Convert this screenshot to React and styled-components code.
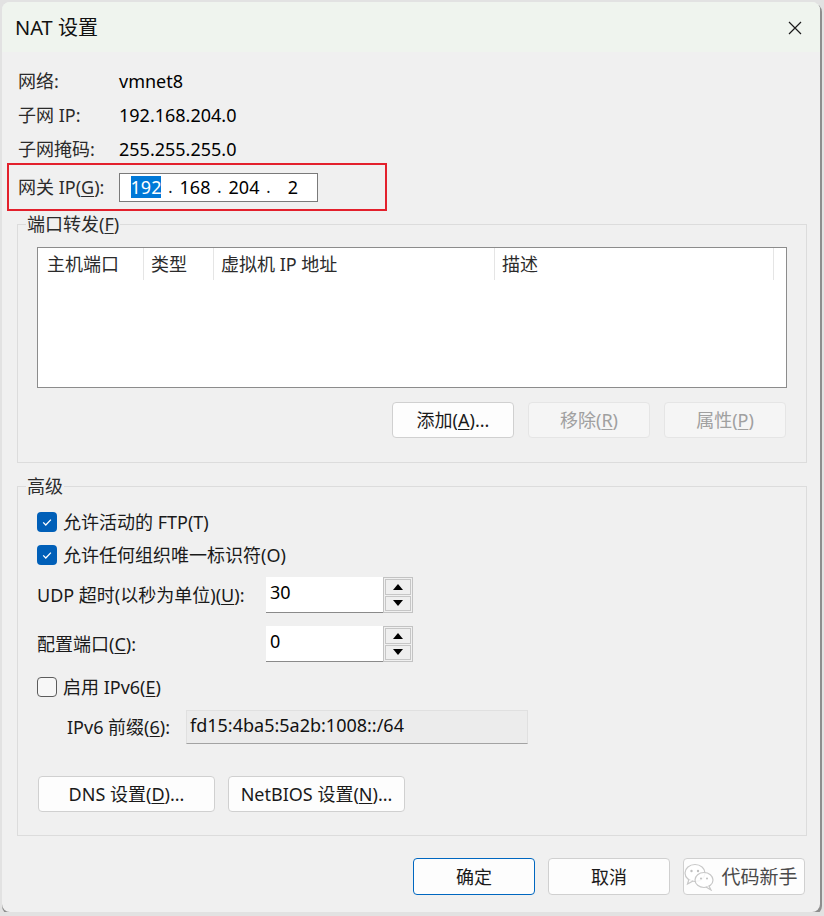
import React from "react";
import styled, { createGlobalStyle } from "styled-components";

const GlobalStyle = createGlobalStyle`
  html, body {
    margin: 0;
    padding: 0;
    background: #e2e2e2;
  }
  body {
    font-family: "Noto Sans", "Noto Sans CJK SC", sans-serif;
    font-size: 18px;
    line-height: 22px;
    color: #1a1a1a;
  }
  * { box-sizing: border-box; }
  u { text-underline-offset: 2px; text-decoration-thickness: 1px; }
`;

const info = [
  { label: "网络:", value: "vmnet8" },
  { label: "子网 IP:", value: "192.168.204.0" },
  { label: "子网掩码:", value: "255.255.255.0" },
];

const columns = [
  { title: "主机端口", width: 106, pad: 9 },
  { title: "类型", width: 70, pad: 7 },
  { title: "虚拟机 IP 地址", width: 281, pad: 7 },
  { title: "描述", width: 279, pad: 7 },
];

const Check = () => (
  <svg width="20" height="20" viewBox="0 0 20 20">
    <path d="M6.2 10.4 L8.8 13 L13.9 7.6" fill="none" stroke="#fff" strokeWidth="1.3" />
  </svg>
);

const Arrow = ({ up }) => (
  <svg width="10" height="6" viewBox="0 0 10 6">
    <path d={up ? "M0 6 L5 0 L10 6 Z" : "M0 0 L10 0 L5 6 Z"} fill="#000" />
  </svg>
);

const WeChat = () => (
  <svg width="32" height="28" viewBox="0 0 32 28">
    <g fill="rgba(255,255,255,0.85)" stroke="#c8c8c8" strokeWidth="1.2">
      <ellipse cx="11" cy="10" rx="10" ry="8.5" />
      <path d="M5 16 L3.5 21 L9 18" />
      <ellipse cx="20" cy="17" rx="9" ry="7.5" />
      <path d="M25 23 L27 27 L22 24" />
    </g>
    <g fill="#c0c0c0">
      <circle cx="7.5" cy="8" r="1.2" />
      <circle cx="14" cy="8" r="1.2" />
      <circle cx="17" cy="15.5" r="1" />
      <circle cx="23" cy="15.5" r="1" />
    </g>
  </svg>
);

const App = () => {
  return (
    <>
      <GlobalStyle />
      <Window>
        <TitleBar>
          <Title>NAT 设置</Title>
          <CloseIcon width="14" height="14" viewBox="0 0 14 14">
            <path d="M1 1 L13 13 M13 1 L1 13" stroke="#1a1a1a" strokeWidth="1.2" />
          </CloseIcon>
        </TitleBar>
        <Body>
          <InfoGrid>
            {info.map((row) => (
              <React.Fragment key={row.label}>
                <Label>{row.label}</Label>
                <Value>{row.value}</Value>
              </React.Fragment>
            ))}
          </InfoGrid>

          <GatewayBox>
            <GatewayLabel>
              网关 IP(<u>G</u>):
            </GatewayLabel>
            <IpBox>
              <IpPart>
                <Selected>192</Selected>
              </IpPart>
              <IpDot>.</IpDot>
              <IpPart>168</IpPart>
              <IpDot>.</IpDot>
              <IpPart>204</IpPart>
              <IpDot>.</IpDot>
              <IpPart>2</IpPart>
            </IpBox>
          </GatewayBox>

          <Group $top={2} $padBottom={24}>
            <Legend>
              端口转发(<u>F</u>)
            </Legend>
            <ListView>
              <ListHeader>
                {columns.map((c) => (
                  <HeaderCell key={c.title} $w={c.width} $pad={c.pad}>
                    {c.title}
                  </HeaderCell>
                ))}
              </ListHeader>
            </ListView>
            <ButtonRow>
              <Button>
                添加(<u>A</u>)...
              </Button>
              <Button disabled>
                移除(<u>R</u>)
              </Button>
              <Button disabled>
                属性(<u>P</u>)
              </Button>
            </ButtonRow>
          </Group>

          <Group $top={12} $padTop={8} $padBottom={23}>
            <Legend>高级</Legend>
            <CheckRow>
              <CheckBox $checked>
                <Check />
              </CheckBox>
              <span>允许活动的 FTP(T)</span>
            </CheckRow>
            <CheckRow>
              <CheckBox $checked>
                <Check />
              </CheckBox>
              <span>允许任何组织唯一标识符(O)</span>
            </CheckRow>

            <FieldRow $top={6}>
              <FieldLabel $w={229}>
                UDP 超时(以秒为单位)(<u>U</u>):
              </FieldLabel>
              <SpinBox>
                <SpinInput $h={36}>30</SpinInput>
                <SpinButtons>
                  <SpinButton>
                    <Arrow up />
                  </SpinButton>
                  <SpinButton>
                    <Arrow />
                  </SpinButton>
                </SpinButtons>
              </SpinBox>
            </FieldRow>

            <FieldRow $top={13}>
              <FieldLabel $w={229}>
                配置端口(<u>C</u>):
              </FieldLabel>
              <SpinBox>
                <SpinInput $h={36}>0</SpinInput>
                <SpinButtons>
                  <SpinButton>
                    <Arrow up />
                  </SpinButton>
                  <SpinButton>
                    <Arrow />
                  </SpinButton>
                </SpinButtons>
              </SpinBox>
            </FieldRow>

            <CheckRow $top={8}>
              <CheckBox />
              <span>
                启用 IPv6(<u>E</u>)
              </span>
            </CheckRow>

            <FieldRow $top={7} $indent={30}>
              <FieldLabel $w={119}>
                IPv6 前缀(<u>6</u>):
              </FieldLabel>
              <DisabledInput>fd15:4ba5:5a2b:1008::/64</DisabledInput>
            </FieldRow>

            <DnsRow>
              <Button $w={177}>
                DNS 设置(<u>D</u>)...
              </Button>
              <Button $w={177}>
                NetBIOS 设置(<u>N</u>)...
              </Button>
            </DnsRow>
          </Group>

          <Footer>
            <Button $primary $h={37}>
              确定
            </Button>
            <Button $h={37}>取消</Button>
            <Button $h={37}>
              <Watermark>
                <WeChat />
                <WatermarkText>代码新手</WatermarkText>
              </Watermark>
            </Button>
          </Footer>
        </Body>
      </Window>
    </>
  );
};
export default App;

const Window = styled.div`
  margin: 2px 0 0 2px;
  width: 818px;
  height: 910px;
  background: #f0f0f0;
  border-radius: 8px;
  box-shadow: 1px 2px 0 1px #8e8e8e;
  overflow: hidden;
  display: flex;
  flex-direction: column;
`;

const TitleBar = styled.div`
  height: 50px;
  flex-shrink: 0;
  background: #eff4ee;
  display: flex;
  align-items: center;
  justify-content: space-between;
  padding: 0 18px 0 13px;
`;

const Title = styled.div`
  font-size: 20px;
  line-height: 24px;
  color: #111;
  padding-top: 1px;
`;

const CloseIcon = styled.svg`
  display: block;
  margin-top: 2px;
`;

const Body = styled.div`
  flex: 1;
  display: flex;
  flex-direction: column;
  padding: 12px 13px 0 15px;
`;

const InfoGrid = styled.div`
  display: grid;
  grid-template-columns: 101px auto;
  grid-auto-rows: 34px;
  align-items: center;
  padding-left: 1px;
`;

const Label = styled.div`
  color: #2b2b2b;
`;

const Value = styled.div`
  color: #000;
`;

const GatewayBox = styled.div`
  margin: -3px 0 0 -10px;
  width: 380px;
  height: 48px;
  border: 2px solid #e3202c;
  display: flex;
  align-items: center;
  padding-left: 9px;
`;

const GatewayLabel = styled.div`
  width: 101px;
  color: #2b2b2b;
`;

const IpBox = styled.div`
  width: 199px;
  height: 29px;
  background: #fff;
  border: 1px solid #7a7a7a;
  display: flex;
  align-items: center;
  padding-left: 6px;
`;

const IpPart = styled.span`
  width: 40px;
  text-align: center;
  color: #000;
`;

const IpDot = styled.span`
  width: 9px;
  text-align: center;
  font-size: 16px;
`;

const Selected = styled.span`
  background: #0078d7;
  color: #fff;
  display: inline-block;
  line-height: 22px;
`;

const Group = styled.fieldset`
  margin: ${(p) => p.$top}px 0 0 0;
  padding: ${(p) => p.$padTop ?? 12}px 19px ${(p) => p.$padBottom ?? 22}px 19px;
  border: 1px solid #dcdcdc;
  min-width: 0;
`;

const Legend = styled.legend`
  margin-left: -11px;
  padding: 0 1px;
  line-height: 22px;
  color: #2b2b2b;
`;

const ListView = styled.div`
  height: 141px;
  background: #fff;
  border: 1px solid #8c8c8c;
`;

const ListHeader = styled.div`
  display: flex;
  height: 32px;
`;

const HeaderCell = styled.div`
  width: ${(p) => p.$w}px;
  padding: 5px 0 0 ${(p) => p.$pad}px;
  border-right: 1px solid #e5e5e5;
  color: #2b2b2b;
  white-space: nowrap;
`;

const ButtonRow = styled.div`
  display: flex;
  justify-content: flex-end;
  gap: 14px;
  margin-top: 14px;
  padding-right: 1px;
`;

const Button = styled.button`
  width: ${(p) => p.$w ?? 122}px;
  height: ${(p) => p.$h ?? 36}px;
  padding: 0;
  font: inherit;
  border-radius: 4px;
  border: 1px solid ${(p) => (p.$primary ? "#0067c0" : "#d0d0d0")};
  background: #fdfdfd;
  color: #1a1a1a;
  display: flex;
  align-items: center;
  justify-content: center;

  &:disabled {
    background: #f5f5f5;
    border-color: #e5e5e5;
    color: #a0a0a0;
  }
`;

const CheckRow = styled.div`
  display: flex;
  align-items: center;
  gap: 6px;
  height: 33px;
  margin-top: ${(p) => p.$top ?? 0}px;
  color: #1a1a1a;
`;

const CheckBox = styled.span`
  width: 20px;
  height: 20px;
  border-radius: 4px;
  flex-shrink: 0;
  display: flex;
  background: ${(p) => (p.$checked ? "#005fb8" : "#f7f7f7")};
  border: ${(p) => (p.$checked ? "none" : "1px solid #5c5c5c")};
`;

const FieldRow = styled.div`
  display: flex;
  align-items: center;
  margin-top: ${(p) => p.$top}px;
  padding-left: ${(p) => p.$indent ?? 0}px;
`;

const FieldLabel = styled.div`
  width: ${(p) => p.$w}px;
  flex-shrink: 0;
  color: #1a1a1a;
  white-space: nowrap;
`;

const SpinBox = styled.div`
  display: flex;
`;

const SpinInput = styled.div`
  width: 117px;
  height: ${(p) => p.$h}px;
  background: #fff;
  border-bottom: 1px solid #8a8a8a;
  padding: 4px 0 0 4px;
  color: #000;
`;

const SpinButtons = styled.div`
  width: 30px;
  border: 1px solid #c3c3c3;
  padding: 1px;
  display: flex;
  flex-direction: column;
  gap: 1px;
`;

const SpinButton = styled.div`
  flex: 1;
  border: 1px solid #c6c6c6;
  background: #efefef;
  display: flex;
  align-items: center;
  justify-content: center;
`;

const DisabledInput = styled.div`
  width: 342px;
  height: 34px;
  background: #ececec;
  border: 1px solid #e0e0e0;
  border-bottom-color: #a3a3a3;
  padding: 3px 0 0 3px;
  color: #111;
`;

const DnsRow = styled.div`
  display: flex;
  gap: 13px;
  margin-top: 32px;
  padding-left: 1px;
`;

const Footer = styled.div`
  display: flex;
  justify-content: flex-end;
  gap: 13px;
  margin-top: 22px;
  padding-right: 2px;
`;

const Watermark = styled.div`
  display: flex;
  align-items: center;
  gap: 5px;
  margin-left: -6px;
`;

const WatermarkText = styled.span`
  font-size: 19px;
  color: #4a4a4a;
  text-shadow: 0 0 1px #fff, 1px 0 0 rgba(255, 255, 255, 0.7);
`;
